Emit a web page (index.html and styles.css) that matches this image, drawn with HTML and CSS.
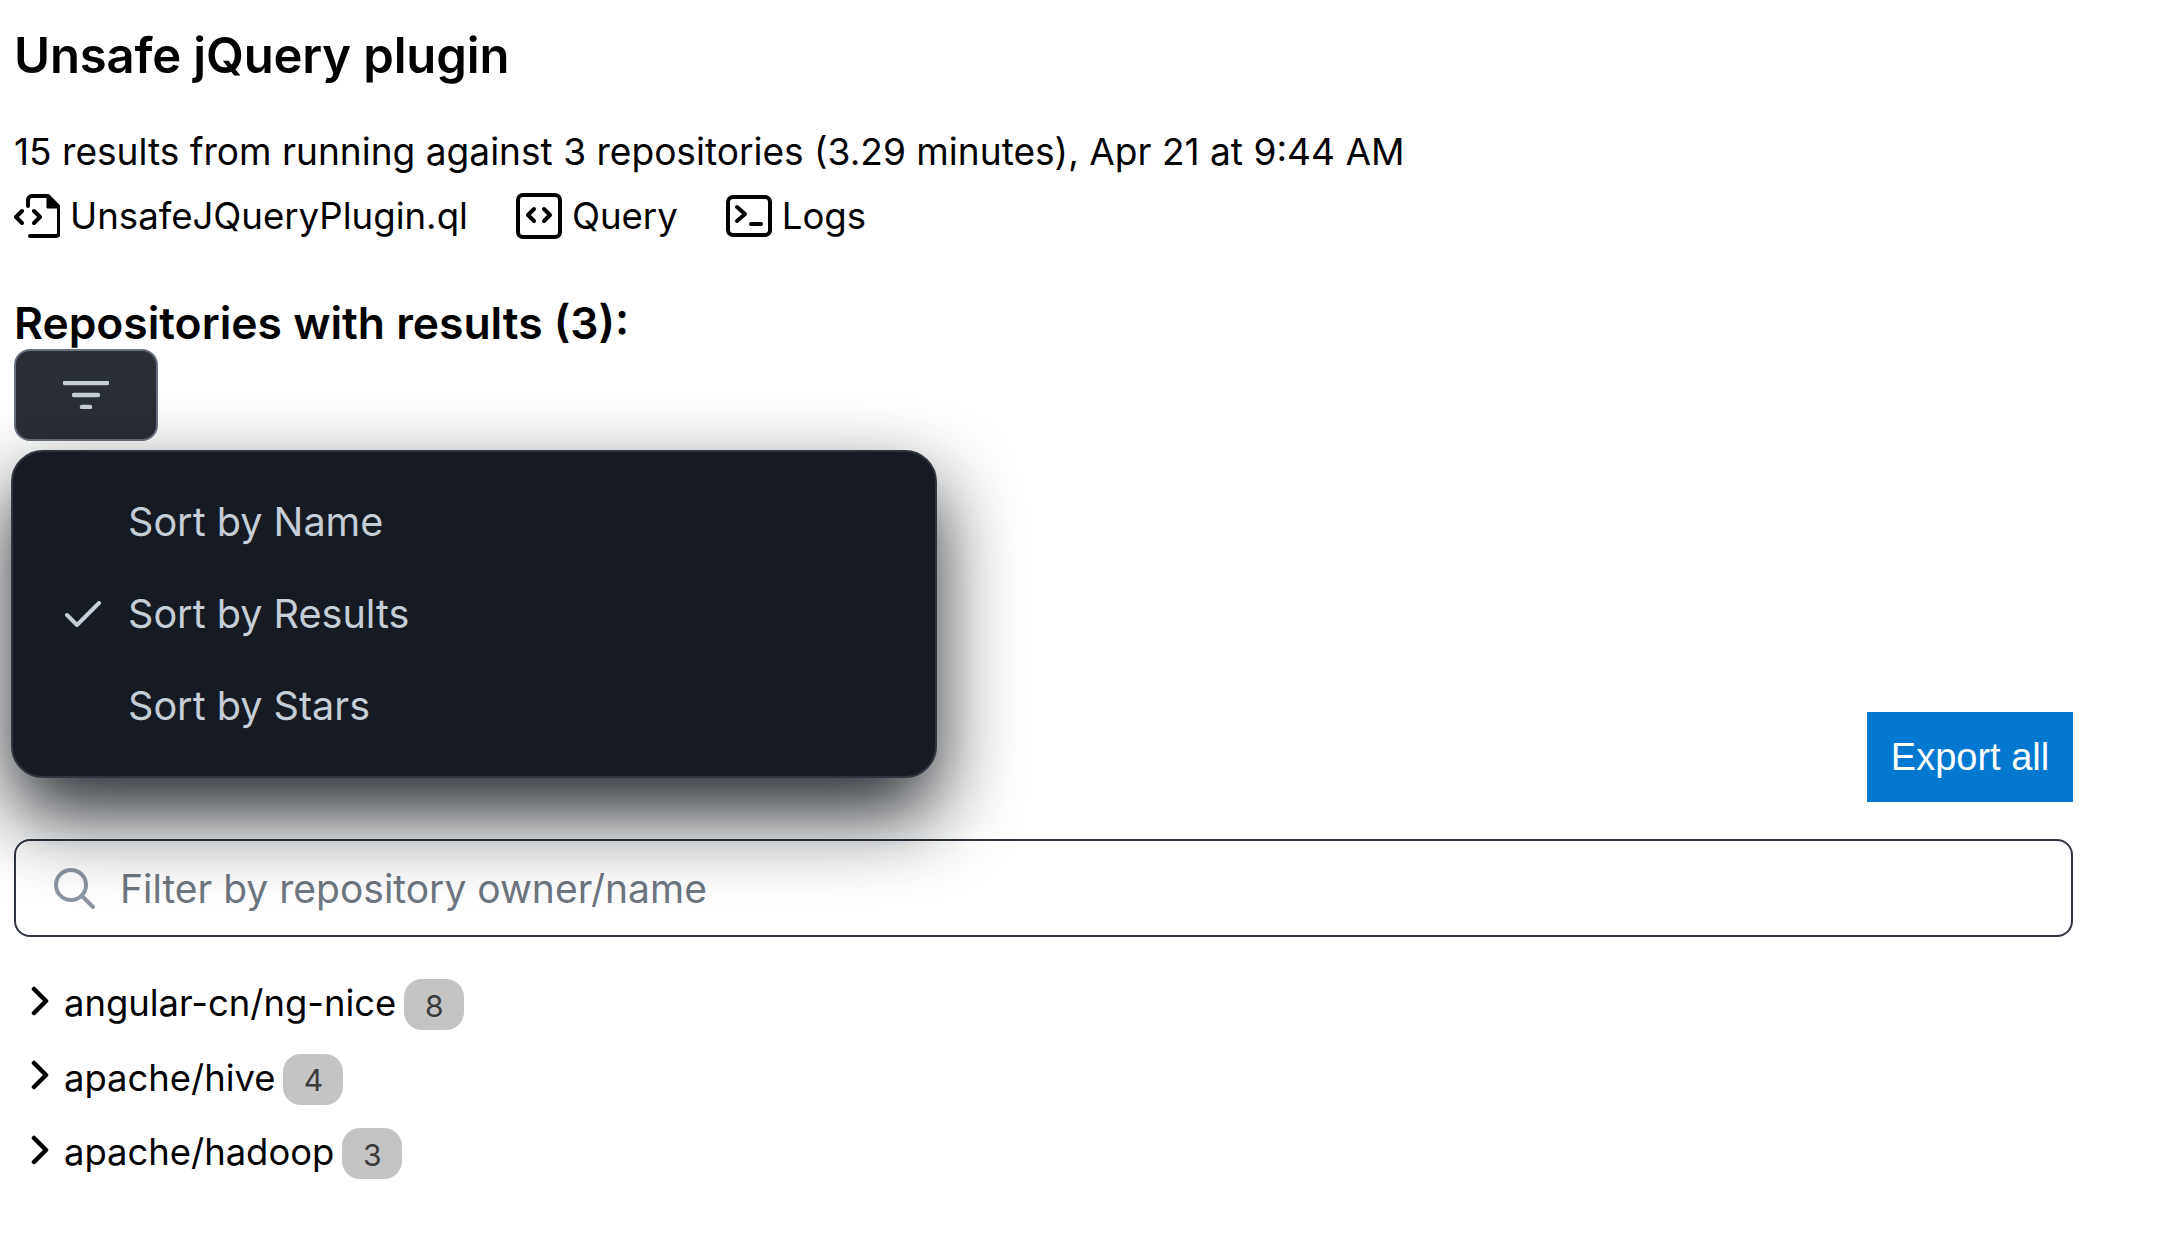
FILE: index.html
```html
<!DOCTYPE html>
<html lang="en">
<head>
  <meta charset="UTF-8">
  <meta name="viewport" content="width=device-width, initial-scale=1.0">
  <title>Unsafe jQuery plugin</title>
  <link rel="stylesheet" href="styles.css">
</head>
<body>
  <main class="page">
    <h1 class="title">Unsafe jQuery plugin</h1>
    <p class="summary">15 results from running against 3 repositories (3.29 minutes), Apr 21 at 9:44 AM</p>

    <div class="links">
      <a class="link link-file">
        <svg class="icon-file" viewBox="0 0 46 44" width="46" height="44" fill="none" stroke="#000" stroke-width="4" stroke-linecap="round" stroke-linejoin="round">
          <path d="M14 12V6a4 4 0 0 1 4-4h16l11 11v26a3 3 0 0 1-3 3H16"/>
          <path d="M33 3v11h11z" fill="#000" stroke-width="1"/>
          <path d="M8 17l-6 6 6 6M20 17l6 6-6 6"/>
        </svg>
        UnsafeJQueryPlugin.ql
      </a>
      <a class="link link-query">
        <svg viewBox="0 0 46 46" width="46" height="46" fill="none" stroke="#000" stroke-width="4" stroke-linecap="round" stroke-linejoin="round">
          <rect x="2" y="2" width="42" height="42" rx="5"/>
          <path d="M18 16l-6 6 6 6M28 16l6 6-6 6"/>
        </svg>
        Query
      </a>
      <a class="link link-logs">
        <svg viewBox="0 0 46 42" width="46" height="42" fill="none" stroke="#000" stroke-width="4" stroke-linecap="round" stroke-linejoin="round">
          <rect x="2" y="2" width="42" height="38" rx="5"/>
          <path d="M11 12l8 7-8 7M25 29h10"/>
        </svg>
        Logs
      </a>
    </div>

    <h2 class="subtitle">Repositories with results (3):</h2>

    <div class="sort">
      <button class="sort-button">
        <svg viewBox="0 0 46 28" width="46" height="28" fill="none" stroke="#c5cdd6" stroke-width="4.5" stroke-linecap="round">
          <path d="M2 2h42M11 14h24M19 26h8"/>
        </svg>
      </button>
      <ul class="sort-menu">
        <li class="sort-item">Sort by Name</li>
        <li class="sort-item">
          <svg class="check" viewBox="0 0 36 26" width="36" height="26" fill="none" stroke="#c5cdd6" stroke-width="4" stroke-linecap="round" stroke-linejoin="round">
            <path d="M2 14l10 10L34 2"/>
          </svg>
          Sort by Results
        </li>
        <li class="sort-item">Sort by Stars</li>
      </ul>
    </div>

    <div class="export-row">
      <button class="export">Export all</button>
    </div>

    <div class="search">
      <svg viewBox="0 0 42 42" width="42" height="42" fill="none" stroke="#8c96a3" stroke-width="4" stroke-linecap="round">
        <circle cx="18" cy="18" r="15"/>
        <path d="M29 29l11 11"/>
      </svg>
      <span class="placeholder">Filter by repository owner/name</span>
    </div>

    <ul class="repos">
      <li class="repo">
        <svg class="chevron" viewBox="0 0 18 30" width="18" height="30"><path d="M3 3l12 12L3 27"/></svg>
        <span class="repo-name">angular-cn/ng-nice</span>
        <span class="count">8</span>
      </li>
      <li class="repo">
        <svg class="chevron" viewBox="0 0 18 30" width="18" height="30"><path d="M3 3l12 12L3 27"/></svg>
        <span class="repo-name">apache/hive</span>
        <span class="count">4</span>
      </li>
      <li class="repo">
        <svg class="chevron" viewBox="0 0 18 30" width="18" height="30"><path d="M3 3l12 12L3 27"/></svg>
        <span class="repo-name">apache/hadoop</span>
        <span class="count">3</span>
      </li>
    </ul>
  </main>
</body>
</html>
```

FILE: styles.css
```css
body {
  background-color: #fff;
  color: #000;
  font-family: Inter, 'Liberation Sans', sans-serif;
  margin: 0;
  padding: 0;
}
.page {
  width: 2059px;
  padding: 0 14px;
}
.title {
  font-size: 49px;
  font-weight: 600;
  letter-spacing: -0.15px;
  line-height: 60px;
  margin: 0;
  padding-top: 26px;
}
.summary {
  font-size: 37.1px;
  line-height: 46px;
  margin: 43px 0 0;
}
.links {
  display: flex;
  align-items: center;
  height: 50px;
  margin-top: 16px;
  font-size: 36.6px;
}
.link {
  display: flex;
  align-items: center;
  gap: 10px;
  margin-right: 48px;
}
.subtitle {
  font-size: 44.4px;
  font-weight: 600;
  line-height: 52px;
  margin: 56px 0 0;
}
.sort {
  position: relative;
}
.sort-button {
  display: flex;
  align-items: center;
  justify-content: center;
  width: 144px;
  height: 92px;
  padding: 0;
  background-color: #2a2e35;
  border: 2px solid #6a7280;
  border-radius: 16px;
}
.sort-menu {
  position: absolute;
  top: 101px;
  left: -3px;
  width: 922px;
  height: 278px;
  margin: 0;
  padding: 24px 0 22px;
  list-style: none;
  background-color: #161b23;
  border: 2px solid #303640;
  border-radius: 32px;
  box-shadow: 0 36px 80px rgba(10, 14, 20, 0.9);
  z-index: 2;
}
.sort-item {
  position: relative;
  height: 92px;
  line-height: 92px;
  padding-left: 115px;
  font-size: 39.6px;
  color: #c5cdd6;
}
.check {
  position: absolute;
  left: 52px;
  top: 33px;
}
.export-row {
  display: flex;
  justify-content: flex-end;
  margin-top: 271px;
}
.export {
  width: 206px;
  height: 90px;
  background-color: #0378d0;
  color: #fff;
  border: none;
  font-family: 'Liberation Sans', sans-serif;
  font-size: 38px;
}
.search {
  display: flex;
  align-items: center;
  gap: 25px;
  height: 98px;
  box-sizing: border-box;
  margin-top: 37px;
  padding-left: 37px;
  border: 2px solid #2f3540;
  border-radius: 16px;
}
.placeholder {
  font-size: 39px;
  color: #6e7781;
}
.repos {
  list-style: none;
  margin: 42px 0 0;
  padding: 0;
}
.repo {
  display: flex;
  align-items: center;
  height: 51px;
  margin-bottom: 23.5px;
  font-size: 36.4px;
}
.repo-name {
  margin-top: -3px;
}
.chevron {
  fill: none;
  stroke: #000;
  stroke-width: 4.5;
  stroke-linecap: round;
  stroke-linejoin: round;
  margin: -8px 15px 0 17px;
}
.count {
  display: flex;
  align-items: center;
  justify-content: center;
  width: 60px;
  height: 51px;
  margin-left: 8px;
  padding-top: 2px;
  box-sizing: border-box;
  background-color: #c4c4c4;
  border-radius: 18px;
  color: #3a3a3a;
  font-size: 30px;
}
```
